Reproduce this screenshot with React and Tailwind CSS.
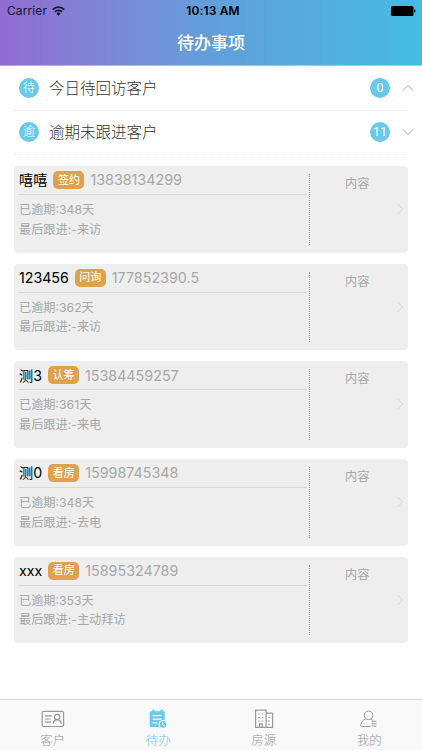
import { useState } from 'react'

const clients = [
  { name: '嘻嘻', tag: '签约', phone: '13838134299', days: 348, last: '来访' },
  { name: '123456', tag: '问询', phone: '177852390.5', days: 362, last: '来访' },
  { name: '测3', tag: '认筹', phone: '15384459257', days: 361, last: '来电' },
  { name: '测0', tag: '看房', phone: '15998745348', days: 348, last: '去电' },
  { name: 'xxx', tag: '看房', phone: '15895324789', days: 353, last: '主动拜访' },
]

const tabs = [
  { id: 'clients', label: '客户', Icon: CardIcon },
  { id: 'todo', label: '待办', Icon: TodoIcon },
  { id: 'houses', label: '房源', Icon: BuildingIcon },
  { id: 'me', label: '我的', Icon: UserIcon },
]

function CardIcon() {
  return (
    <svg width="24" height="20" viewBox="0 0 24 20" fill="none" stroke="currentColor" strokeWidth="1.2">
      <rect x="1.2" y="2.3" width="21.4" height="15.2" rx="1.5" />
      <path d="M4 6.800h7M4 10h5.500M4 13.200h6M12.200 14.800c.2-2.600 1.400-4.100 4-4.100s3.800 1.500 4 4.100" />
      <circle cx="16.2" cy="8" r="2.7" />
    </svg>
  )
}

function TodoIcon() {
  return (
    <svg width="20" height="20" viewBox="0 0 20 20">
      <path fill="currentColor" d="M3.200 2.200h1V.7h2.400v1.500h5.800V.7h2.400v1.500h.9a1 1 0 0 1 1 1V17a1 1 0 0 1-1 1H3.200a1.500 1.500 0 0 1-1.500-1.500V3.700a1.500 1.500 0 0 1 1.500-1.500z" />
      <path stroke="#f9f9f9" strokeWidth="1.200" d="M4.600 6.600h9M4.600 10.200h9M4.600 13.800h5" />
      <circle cx="15" cy="15.400" r="3.900" fill="currentColor" stroke="#f9f9f9" strokeWidth="1.200" />
      <path fill="none" stroke="#f9f9f9" strokeWidth="1" d="M14.600 13v2.900l1.900 1.200" />
    </svg>
  )
}

function BuildingIcon() {
  return (
    <svg width="20" height="20" viewBox="0 0 20 20" fill="none" stroke="currentColor">
      <path strokeWidth="1.200" d="M1.600 18.300V1.100h10.500v17.200M12.100 4.200h6.500v14.100M1 18.300h18.200M5.500 18.300v-3.500h2.700v3.500" />
      <path strokeWidth="1.200" strokeDasharray="1.400 2.200" d="M4.300 5h6M4.300 8.500h6M4.300 12h6M14.300 8.500h3M14.300 12h3M14.300 15.300h3" />
    </svg>
  )
}

function UserIcon() {
  return (
    <svg width="20" height="20" viewBox="0 0 20 20" fill="none" stroke="currentColor">
      <circle cx="9.600" cy="6.300" r="4.300" />
      <path d="M7 9.800c-3.300 1.200-5 3.700-5.300 6.300-.1.900.4 1.400 1.200 1.400h8.600M11.700 10l2 1.300M12.600 12.300h4.800M12.600 14.700h4.800M12.600 17h4.800" />
    </svg>
  )
}

function StatusBar() {
  return (
    <div className="flex h-[22px] items-center justify-between pl-[7px] pr-[6px] text-[#15151f]">
      <div className="flex w-24 items-center gap-[5px]">
        <span className="text-[12px] tracking-[0.1px]">Carrier</span>
        <svg width="13" height="10" viewBox="0 0 13 10" fill="none" stroke="currentColor" strokeWidth="1.700">
          <path d="M.7 3.600a8.200 8.200 0 0 1 11.600 0M2.900 5.900a5.100 5.100 0 0 1 7.200 0" />
          <path fill="currentColor" stroke="none" d="M6.500 9.700 4.400 7.500a3 3 0 0 1 4.200 0z" />
        </svg>
      </div>
      <span className="pl-[3px] text-[12px] font-semibold tracking-[0.15px] text-black">10:13 AM</span>
      <div className="flex w-24 justify-end">
        <svg width="25" height="10" viewBox="0 0 25 10" fill="#000">
          <rect width="22.500" height="10" rx="1.500" />
          <path d="M23.300 3.300c1.700.3 1.700 3.100 0 3.400z" />
        </svg>
      </div>
    </div>
  )
}

function Section({ mark, title, count, open, onToggle }) {
  return (
    <button onClick={onToggle} className="ml-[14px] mr-[14px] flex h-[44.500px] items-center border-b border-dotted border-[#ebebeb] pl-[5px] text-left">
      <span className="flex size-[20px] items-center justify-center rounded-full bg-[#68cae8] text-[12px] font-light leading-none text-white">{mark}</span>
      <span className="ml-[10px] flex-1 pt-px text-[15.500px] font-light text-[#333]">{title}</span>
      <span className="flex size-[20px] items-center justify-center rounded-full bg-[#68cae8] font-['Roboto'] text-[12.500px] leading-none text-white">{count}</span>
      <svg className="-mr-[6px] ml-[12px]" width="12" height="8" viewBox="0 0 12 8" fill="none" stroke="#a5a5a5">
        <path d={open ? 'M1 6.500 6 1.500l5 5' : 'M1 1.500l5 5 5-5'} />
      </svg>
    </button>
  )
}

function ClientCard({ client }) {
  return (
    <div className="flex h-[86.700px] rounded-[4px] bg-[#eee]">
      <div className="w-[293px] pl-[5px]">
        <div className="flex h-[29px] items-center border-b border-[#d9d9d9]">
          <span className="text-[14.200px] text-black">{client.name}</span>
          <span className="ml-[6px] flex h-[18px] w-[31px] items-center justify-center rounded-[5px] bg-[#dea24c] text-[11px] leading-none text-white">{client.tag}</span>
          <span className="ml-[6px] text-[14.300px] text-[#a8a8a8]">{client.phone}</span>
        </div>
        <div className="pt-[5px] text-[12.200px] leading-[19.500px] text-[#a8a8a8]">
          <p>已逾期:{client.days}天</p>
          <p>最后跟进:-{client.last}</p>
        </div>
      </div>
      <div className="mb-[8px] ml-[2px] mt-[8px] border-l border-dotted border-[#999]" />
      <div className="flex flex-1 justify-between pl-[35px] pt-[9px] text-[12.200px] text-[#a8a8a8]">
        <span className="leading-[18px]">内容</span>
        <svg className="mr-[4px] mt-[28px]" width="8" height="12" viewBox="0 0 8 12" fill="none" stroke="#d6d6d6">
          <path d="M1.500 1l5 5-5 5" />
        </svg>
      </div>
    </div>
  )
}

export default function App() {
  const [open, setOpen] = useState('today')
  const [tab, setTab] = useState('todo')

  return (
    <div className="flex h-[750px] w-[422px] flex-col overflow-hidden bg-white font-['Inter','Noto_Sans_CJK_SC',sans-serif]">
      <header className="h-[66px] shrink-0 border-b border-white/40 bg-linear-to-r from-[#916bd2] via-[#609fda] to-[#44bce0] bg-origin-border">
        <StatusBar />
        <h1 className="flex h-[43px] items-center justify-center text-[17px] font-medium text-white">待办事项</h1>
      </header>

      <main className="flex flex-1 flex-col">
        <Section mark="待" title="今日待回访客户" count={0} open={open === 'today'} onToggle={() => setOpen('today')} />
        <Section mark="逾" title="逾期未跟进客户" count={11} open={open === 'overdue'} onToggle={() => setOpen('overdue')} />
        <div className="ml-[14px] mr-[14px] mt-[11px] flex flex-col gap-[11px]">
          {clients.map(c => <ClientCard key={c.phone} client={c} />)}
        </div>
      </main>

      <nav className="grid h-[51px] shrink-0 grid-cols-4 border-t border-[#d8d8d8] bg-[#f9f9f9]">
        {tabs.map(({ id, label, Icon }) => (
          <button key={id} onClick={() => setTab(id)} className={`flex flex-col items-center pt-[9px] ${tab === id ? 'text-[#68cae8]' : 'text-[#999]'}`}>
            <Icon />
            <span className="mt-[3px] text-[12.500px] font-light leading-[18px]">{label}</span>
          </button>
        ))}
      </nav>
    </div>
  )
}
